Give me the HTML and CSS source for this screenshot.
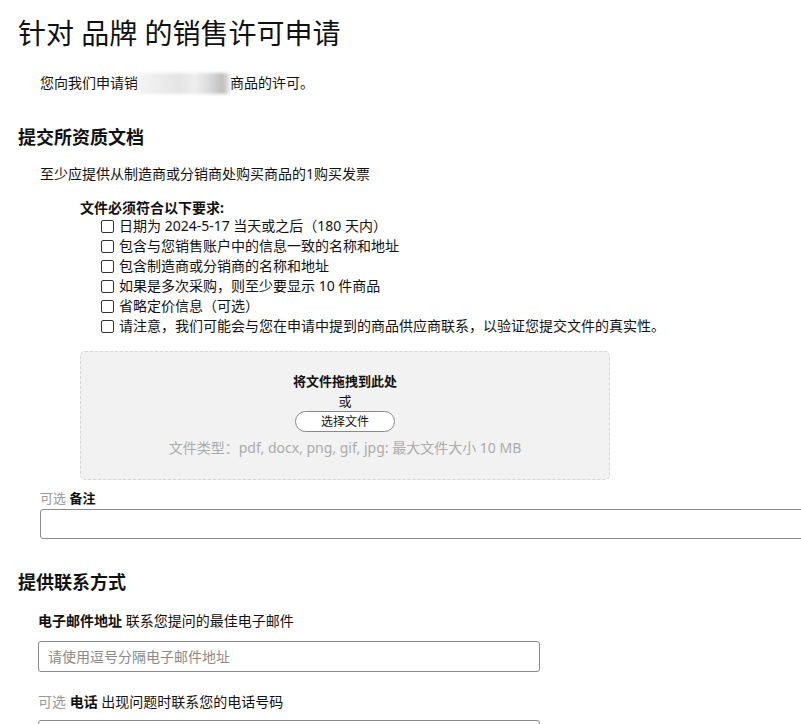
FILE: index.html
```html
<!DOCTYPE html>
<html lang="zh-CN">
<head>
<meta charset="utf-8">
<title>针对 品牌 的销售许可申请</title>
<link rel="stylesheet" href="styles.css">
</head>
<body>
<h1 class="title">针对 品牌 的销售许可申请</h1>
<p class="intro">您向我们申请销<span class="blur"></span>商品的许可。</p>

<h2 class="section">提交所资质文档</h2>
<p class="lead">至少应提供从制造商或分销商处购买商品的1购买发票</p>

<div class="reqs">
  <div class="reqs-title">文件必须符合以下要求:</div>
  <ul class="checklist">
    <li><span class="box"></span>日期为 2024-5-17 当天或之后（180 天内）</li>
    <li><span class="box"></span>包含与您销售账户中的信息一致的名称和地址</li>
    <li><span class="box"></span>包含制造商或分销商的名称和地址</li>
    <li><span class="box"></span>如果是多次采购，则至少要显示 10 件商品</li>
    <li><span class="box"></span>省略定价信息（可选）</li>
    <li><span class="box"></span>请注意，我们可能会与您在申请中提到的商品供应商联系，以验证您提交文件的真实性。</li>
  </ul>
  <div class="dropzone">
    <div class="drop-title">将文件拖拽到此处</div>
    <div class="drop-or">或</div>
    <button class="pick" type="button">选择文件</button>
    <div class="drop-hint">文件类型：pdf, docx, png, gif, jpg: 最大文件大小 10 MB</div>
  </div>
</div>

<div class="field notes">
  <label class="label"><span class="opt">可选</span> <b>备注</b></label>
  <textarea class="notes-box"></textarea>
</div>

<h2 class="section contact">提供联系方式</h2>

<div class="field email">
  <label class="label"><b>电子邮件地址</b> 联系您提问的最佳电子邮件</label>
  <input class="text-input" type="text" placeholder="请使用逗号分隔电子邮件地址">
</div>

<div class="field phone">
  <label class="label"><span class="opt">可选</span> <b>电话</b> 出现问题时联系您的电话号码</label>
  <input class="text-input" type="text">
</div>
</body>
</html>
```

FILE: styles.css
```css
html, body {
  margin: 0;
  padding: 0;
  overflow-x: hidden;
}
body {
  font-family: "Noto Sans", "Noto Sans CJK SC", sans-serif;
  color: #111;
  font-size: 14px;
  line-height: 20px;
  padding: 0 0 0 18px;
  background: #fff;
}
.title {
  font-size: 28px;
  font-weight: 400;
  line-height: 34px;
  margin: 16px 0 0 0;
  color: #111;
}
.intro {
  margin: 23px 0 0 22px;
  font-size: 14px;
  line-height: 20px;
}
.blur {
  display: inline-block;
  width: 92px;
  height: 21px;
  vertical-align: -6px;
  background: linear-gradient(90deg, #f4f4f4 0%, #ececec 25%, #e4e4e4 45%, #eeeeee 62%, #d9dadd 78%, #c0bebb 92%, #ececec 100%);
  filter: blur(1.5px);
}
.section {
  font-size: 18px;
  font-weight: 700;
  line-height: 24px;
  margin: 31px 0 0 0;
  color: #111;
}
.lead {
  margin: 15px 0 0 22px;
}
.reqs {
  margin: 14px 0 0 62px;
  width: 530px;
}
.reqs-title {
  font-weight: 700;
}
.checklist {
  list-style: none;
  margin: -2px 0 0 0;
  padding: 0 0 0 21px;
  white-space: nowrap;
}
.checklist li {
  display: flex;
  align-items: center;
  height: 20px;
}
.box {
  flex: none;
  width: 11px;
  height: 11px;
  border: 1px solid #333;
  border-radius: 2px;
  margin-right: 5px;
}
.dropzone {
  margin-top: 15px;
  height: 129px;
  box-sizing: border-box;
  background: #f2f2f2;
  border: 1px dashed #d6d6d6;
  border-radius: 5px;
  display: flex;
  flex-direction: column;
  align-items: center;
  padding-top: 19px;
}
.drop-title {
  font-weight: 700;
  font-size: 13px;
  line-height: 20px;
}
.drop-or {
  font-size: 13px;
  line-height: 20px;
}
.pick {
  font-family: inherit;
  font-size: 12px;
  line-height: 17px;
  width: 100px;
  height: 21px;
  padding: 0;
  background: #fff;
  border: 1px solid #888;
  border-radius: 11px;
  color: #111;
}
.drop-hint {
  margin-top: 6px;
  font-size: 14px;
  line-height: 20px;
  color: #ababab;
}
.field {
  display: flex;
  flex-direction: column;
}
.label {
  font-size: 13px;
  line-height: 20px;
}
.label b {
  font-weight: 700;
}
.opt {
  color: #999;
}
.notes {
  margin: 8px 0 0 22px;
}
.notes-box {
  margin-top: 1px;
  width: 790px;
  height: 30px;
  box-sizing: border-box;
  border: 1px solid #8a8a8a;
  border-radius: 3px;
  resize: none;
  font-family: inherit;
}
.contact {
  margin-top: 31px;
}
.email {
  margin: 17px 0 0 20px;
}
.email .label, .phone .label {
  font-size: 14px;
}
.text-input {
  margin-top: 10px;
  width: 502px;
  height: 31px;
  box-sizing: border-box;
  border: 1px solid #8a8a8a;
  border-radius: 3px;
  padding: 0 9px;
  font-family: inherit;
  font-size: 14px;
  color: #111;
}
.text-input::placeholder {
  color: #8a8a8a;
}
.phone {
  margin: 20px 0 0 20px;
}
.phone .text-input {
  margin-top: 8px;
}
```
